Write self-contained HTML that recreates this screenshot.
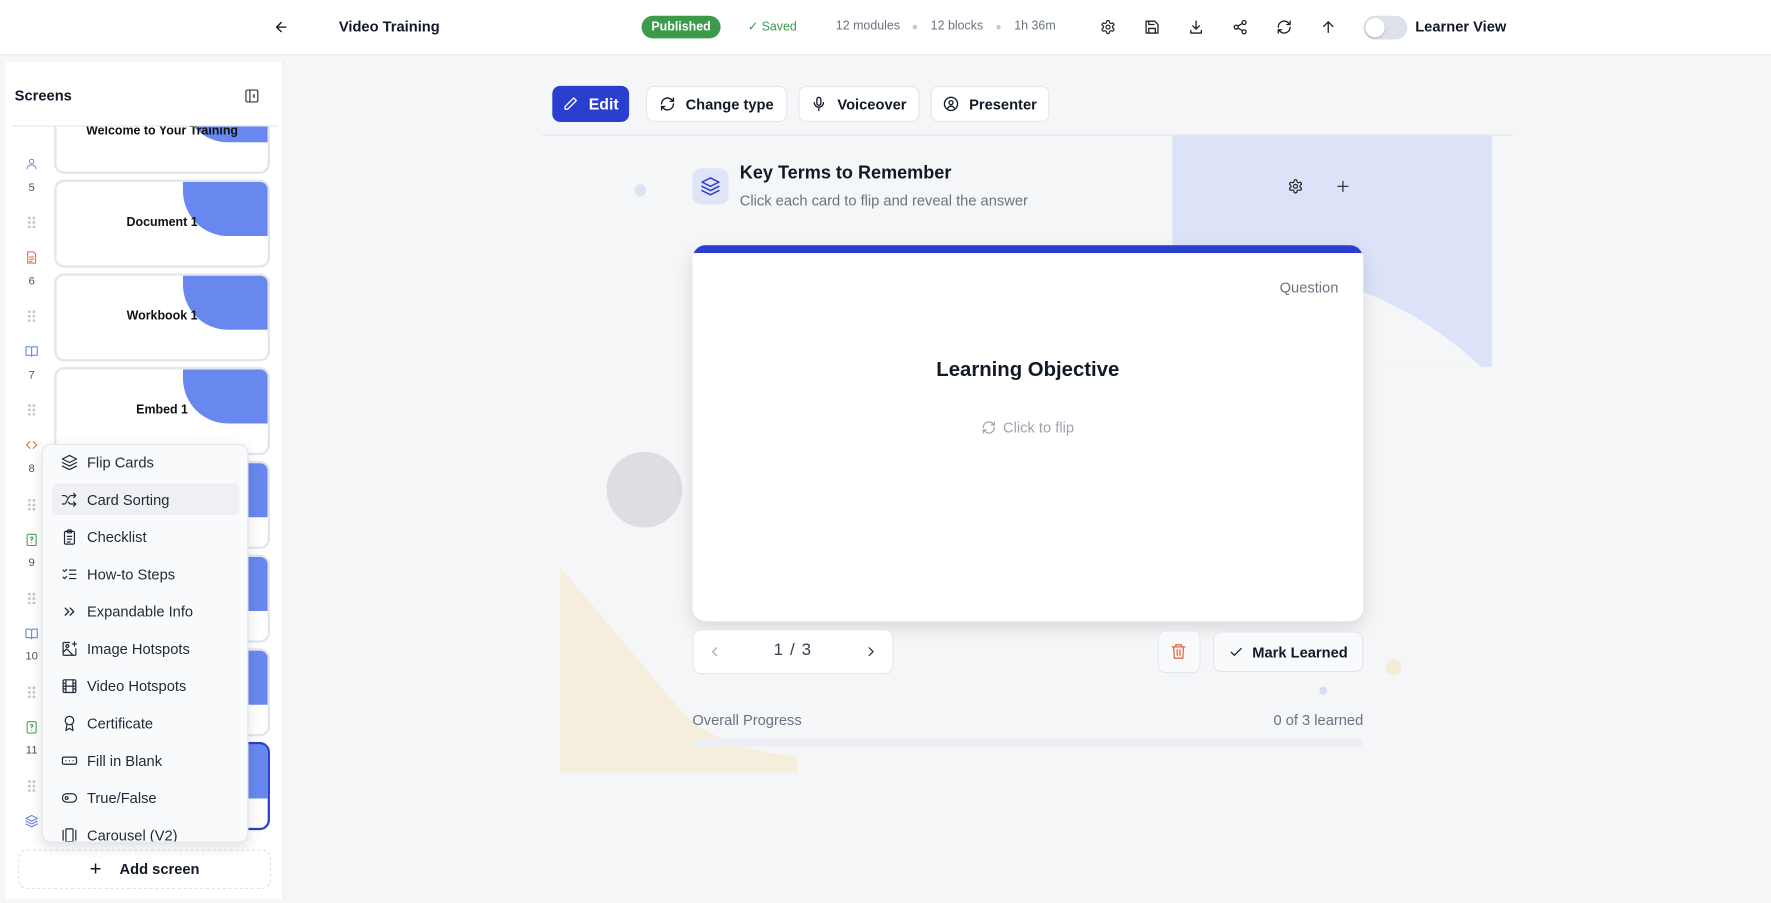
<!DOCTYPE html>
<html><head><meta charset="utf-8"><style>
*{box-sizing:border-box;margin:0;padding:0}
html,body{width:1771px;height:903px;overflow:hidden;background:#f5f6f8}
#w{width:1568px;height:800px;transform:scale(1.12946);transform-origin:0 0;position:relative;overflow:hidden;font-family:"Liberation Sans",sans-serif;color:#111827;background:#f5f6f8}
.a{position:absolute}
svg{display:block;flex-shrink:0}
.ic{fill:none;stroke:currentColor;stroke-width:2;stroke-linecap:round;stroke-linejoin:round}
.hdr{left:0;top:0;width:1568px;height:49px;background:#fff;border-bottom:1px solid #e3e6eb}
.t{font-size:12px;color:#6b7280}
.btn{background:#fff;border:1px solid #e3e6eb;border-radius:7px;height:32px;top:76px;display:flex;align-items:center;justify-content:center;gap:9px;font-size:13px;font-weight:bold;color:#111827;white-space:nowrap}
.thumb{left:48px;width:191px;height:78px;background:#fff;border:2px solid #e1e5ee;border-radius:9px;overflow:hidden}
.thumb .bl{position:absolute;right:0;top:0;width:75px;height:48px;background:#6888f0;border-bottom-left-radius:40px}
.thumb .lb{position:absolute;left:0;right:0;top:30px;text-align:center;font-size:11px;font-weight:bold;color:#111}
.num{left:20px;width:16px;text-align:center;font-size:10px;color:#4b5563}
.dots{left:24px;width:8px;height:11px;background-image:radial-gradient(circle,#c3c7cf 1.2px,transparent 1.4px);background-size:4px 4px}
.menu{left:37px;top:393px;width:183px;height:353px;background:#f9fafb;border:1px solid #e3e6eb;border-radius:8px;box-shadow:0 4px 12px rgba(0,0,0,.12);overflow:hidden}
.mi{position:absolute;left:8px;width:166px;height:28px;display:flex;align-items:center;gap:8px;padding-left:8px;font-size:13px;color:#1f2937;white-space:nowrap}
.mi svg{width:15px;height:15px}
</style></head><body><div id="w">
<div class="a hdr"></div>
<svg class="a ic" style="left:242px;top:17px;color:#111" width="14" height="14" viewBox="0 0 24 24"><path d="M19 12H5M12 19l-7-7 7-7"/></svg>
<div class="a" style="left:300px;top:16px;font-size:13px;font-weight:bold">Video Training</div>
<div class="a" style="left:568px;top:14px;width:70px;height:20px;border-radius:10px;background:#3b9b4b;color:#fff;font-size:11px;font-weight:bold;text-align:center;line-height:20px">Published</div>
<div class="a" style="left:662px;top:17px;font-size:11px;color:#3b9b4b">✓ Saved</div>
<div class="a t" style="left:740px;top:17px;font-size:11px">12 modules</div>
<div class="a" style="left:808px;top:22px;width:4px;height:4px;border-radius:2px;background:#c5c9d0"></div>
<div class="a t" style="left:824px;top:17px;font-size:11px">12 blocks</div>
<div class="a" style="left:882px;top:22px;width:4px;height:4px;border-radius:2px;background:#c5c9d0"></div>
<div class="a t" style="left:898px;top:17px;font-size:11px">1h 36m</div>
<svg class="a ic" style="left:974px;top:17px;color:#222;stroke-width:1.8" width="14" height="14" viewBox="0 0 24 24"><circle cx="12" cy="12" r="3"/><path d="M12.2 2h-.4a2 2 0 0 0-2 2v.2a2 2 0 0 1-1 1.7l-.4.3a2 2 0 0 1-2 0l-.2-.1a2 2 0 0 0-2.7.7l-.2.4a2 2 0 0 0 .7 2.7l.2.1a2 2 0 0 1 1 1.7v.5a2 2 0 0 1-1 1.7l-.2.1a2 2 0 0 0-.7 2.7l.2.4a2 2 0 0 0 2.7.7l.2-.1a2 2 0 0 1 2 0l.4.3a2 2 0 0 1 1 1.7v.2a2 2 0 0 0 2 2h.4a2 2 0 0 0 2-2v-.2a2 2 0 0 1 1-1.7l.4-.3a2 2 0 0 1 2 0l.2.1a2 2 0 0 0 2.7-.7l.2-.4a2 2 0 0 0-.7-2.7l-.2-.1a2 2 0 0 1-1-1.7v-.5a2 2 0 0 1 1-1.7l.2-.1a2 2 0 0 0 .7-2.7l-.2-.4a2 2 0 0 0-2.7-.7l-.2.1a2 2 0 0 1-2 0l-.4-.3a2 2 0 0 1-1-1.7V4a2 2 0 0 0-2-2z"/></svg>
<svg class="a ic" style="left:1013px;top:17px;color:#222" width="14" height="14" viewBox="0 0 24 24"><path d="M5 3h11l5 5v13H3V3z"/><path d="M7 3v5h8M7 21v-7h10v7"/></svg>
<svg class="a ic" style="left:1052px;top:17px;color:#222" width="14" height="14" viewBox="0 0 24 24"><path d="M12 3v12M7 10l5 5 5-5M4 17v4h16v-4"/></svg>
<svg class="a ic" style="left:1091px;top:17px;color:#222" width="14" height="14" viewBox="0 0 24 24"><circle cx="18" cy="5" r="3"/><circle cx="6" cy="12" r="3"/><circle cx="18" cy="19" r="3"/><path d="M8.6 13.5l6.8 4M15.4 6.5l-6.8 4"/></svg>
<svg class="a ic" style="left:1130px;top:17px;color:#222" width="14" height="14" viewBox="0 0 24 24"><path d="M21 12a9 9 0 0 1-15 6.7L3 16M3 12a9 9 0 0 1 15-6.7L21 8M21 3v5h-5M3 21v-5h5"/></svg>
<svg class="a ic" style="left:1169px;top:17px;color:#222" width="14" height="14" viewBox="0 0 24 24"><path d="M12 20V4M5 11l7-7 7 7"/></svg>
<div class="a" style="left:1207px;top:14px;width:39px;height:21px;border-radius:11px;background:#dde1ea"><div style="position:absolute;left:2px;top:2px;width:17px;height:17px;border-radius:9px;background:#fff;box-shadow:0 1px 2px rgba(0,0,0,.2)"></div></div>
<div class="a" style="left:1253px;top:16px;font-size:13px;font-weight:bold">Learner View</div>

<!-- sidebar -->
<div class="a" style="left:5px;top:55px;width:246px;height:741px;background:#fff;border-right:1px solid #e8eaee"></div>
<div class="a" style="left:13px;top:77px;font-size:13px;font-weight:bold">Screens</div>
<svg class="a ic" style="left:216px;top:78px;color:#333;stroke-width:1.8" width="14" height="14" viewBox="0 0 24 24"><rect x="3" y="3" width="18" height="18" rx="2"/><path d="M9 3v18M16 10l-2 2 2 2"/></svg>
<div class="a" style="left:10px;top:111px;width:236px;height:1px;background:#e3e6eb"></div>
<div class="a" style="left:0;top:112px;width:250px;height:640px;overflow:hidden">
 <div class="thumb a" style="top:-36px"><div class="bl"></div><div class="lb" style="top:32px">Welcome to Your Training</div></div>
 <div class="thumb a" style="top:47px"><div class="bl"></div><div class="lb">Document 1</div></div>
 <div class="thumb a" style="top:130px"><div class="bl"></div><div class="lb">Workbook 1</div></div>
 <div class="thumb a" style="top:213px"><div class="bl"></div><div class="lb">Embed 1</div></div>
 <div class="thumb a" style="top:296px"><div class="bl"></div></div>
 <div class="thumb a" style="top:379px"><div class="bl"></div></div>
 <div class="thumb a" style="top:462px"><div class="bl"></div></div>
 <div class="thumb a" style="top:545px;border-color:#2a3fd0"><div class="bl"></div></div>
</div>
<svg class="a ic" style="left:22px;top:139px;color:#5b7ee8;stroke-width:1.6" width="12" height="12" viewBox="0 0 24 24"><circle cx="12" cy="8" r="4"/><path d="M4 21c0-4 4-7 8-7s8 3 8 7"/></svg>
<div class="a num" style="top:161px">5</div><div class="a dots" style="top:191px"></div>
<svg class="a ic" style="left:22px;top:222px;color:#e8663c;stroke-width:1.8" width="12" height="12" viewBox="0 0 24 24"><path d="M5 2h10l4 4v16H5z"/><path d="M8 11h8M8 15h8M8 19h5"/></svg>
<div class="a num" style="top:244px">6</div><div class="a dots" style="top:274px"></div>
<svg class="a ic" style="left:22px;top:305px;color:#5b7ee8;stroke-width:1.8" width="12" height="12" viewBox="0 0 24 24"><path d="M2 4h7a3 3 0 0 1 3 3v14a2 2 0 0 0-2-2H2zM22 4h-7a3 3 0 0 0-3 3v14a2 2 0 0 1 2-2h8z"/></svg>
<div class="a num" style="top:327px">7</div><div class="a dots" style="top:357px"></div>
<svg class="a ic" style="left:22px;top:388px;color:#e8663c;stroke-width:2" width="12" height="12" viewBox="0 0 24 24"><path d="M9 6l-6 6 6 6M15 6l6 6-6 6"/></svg>
<div class="a num" style="top:410px">8</div><div class="a dots" style="top:441px"></div>
<svg class="a ic" style="left:22px;top:472px;color:#3b9b4b;stroke-width:1.8" width="12" height="12" viewBox="0 0 24 24"><rect x="4" y="2" width="16" height="20" rx="2"/><path d="M10 9a2 2 0 1 1 2 2v2M12 17h0"/></svg>
<div class="a num" style="top:493px">9</div><div class="a dots" style="top:524px"></div>
<svg class="a ic" style="left:22px;top:555px;color:#5b7ee8;stroke-width:1.8" width="12" height="12" viewBox="0 0 24 24"><path d="M2 4h7a3 3 0 0 1 3 3v14a2 2 0 0 0-2-2H2zM22 4h-7a3 3 0 0 0-3 3v14a2 2 0 0 1 2-2h8z"/></svg>
<div class="a num" style="top:576px">10</div><div class="a dots" style="top:607px"></div>
<svg class="a ic" style="left:22px;top:638px;color:#3b9b4b;stroke-width:1.8" width="12" height="12" viewBox="0 0 24 24"><rect x="4" y="2" width="16" height="20" rx="2"/><path d="M10 9a2 2 0 1 1 2 2v2M12 17h0"/></svg>
<div class="a num" style="top:659px">11</div><div class="a dots" style="top:690px"></div>
<svg class="a ic" style="left:22px;top:721px;color:#5b7ee8;stroke-width:1.8" width="12" height="12" viewBox="0 0 24 24"><path d="M12 2l10 5-10 5L2 7z"/><path d="M2 12l10 5 10-5M2 17l10 5 10-5"/></svg>
<div class="a" style="left:16px;top:752px;width:224px;height:35px;border:1px dashed #dde1e8;border-radius:8px;display:flex;align-items:center;justify-content:center;gap:16px;font-size:13px;font-weight:bold"><span style="font-size:18px;font-weight:normal">+</span>Add screen</div>

<div class="a menu">
 <div class="mi" style="top:1px"><svg class="ic" viewBox="0 0 24 24" style="stroke-width:1.7"><path d="M12 2l10 5-10 5L2 7z"/><path d="M2 12l10 5 10-5M2 17l10 5 10-5"/></svg>Flip Cards</div>
 <div class="mi" style="top:34px;background:#eef0f4;border-radius:5px"><svg class="ic" viewBox="0 0 24 24" style="stroke-width:1.7"><path d="M2 18h3c3 0 5-12 9-12h7M18 3l3 3-3 3M2 6h3c1.5 0 2.5 1 3.5 2.5M21 18h-7c-1.5 0-2.5-1-3.5-2.5M18 15l3 3-3 3"/></svg>Card Sorting</div>
 <div class="mi" style="top:67px"><svg class="ic" viewBox="0 0 24 24" style="stroke-width:1.7"><rect x="5" y="4" width="14" height="18" rx="2"/><rect x="9" y="2" width="6" height="4" rx="1"/><path d="M9 11h6M9 15h6M9 19h4"/></svg>Checklist</div>
 <div class="mi" style="top:100px"><svg class="ic" viewBox="0 0 24 24" style="stroke-width:1.7"><path d="M3 6l2 2 3-3M3 16l2 2 3-3M12 6h9M12 12h9M12 18h9"/></svg>How-to Steps</div>
 <div class="mi" style="top:133px"><svg class="ic" viewBox="0 0 24 24" style="stroke-width:1.9"><path d="M6 7l5 5-5 5M13 7l5 5-5 5"/></svg>Expandable Info</div>
 <div class="mi" style="top:166px"><svg class="ic" viewBox="0 0 24 24" style="stroke-width:1.7"><path d="M21 12v8a1 1 0 0 1-1 1H4a1 1 0 0 1-1-1V4a1 1 0 0 1 1-1h8M16 5h6M19 2v6M3 17l5-5 9 9"/><circle cx="9" cy="8" r="2"/></svg>Image Hotspots</div>
 <div class="mi" style="top:199px"><svg class="ic" viewBox="0 0 24 24" style="stroke-width:1.7"><rect x="3" y="3" width="18" height="18" rx="2"/><path d="M7 3v18M17 3v18M3 8h4M3 12h18M3 16h4M17 8h4M17 16h4"/></svg>Video Hotspots</div>
 <div class="mi" style="top:232px"><svg class="ic" viewBox="0 0 24 24" style="stroke-width:1.7"><circle cx="12" cy="8" r="6"/><path d="M8.5 13L7 22l5-3 5 3-1.5-9"/></svg>Certificate</div>
 <div class="mi" style="top:265px"><svg class="ic" viewBox="0 0 24 24" style="stroke-width:1.7"><rect x="2" y="7" width="20" height="10" rx="2"/><path d="M7 12h0M12 12h0M17 12h0"/></svg>Fill in Blank</div>
 <div class="mi" style="top:298px"><svg class="ic" viewBox="0 0 24 24" style="stroke-width:1.7"><rect x="2" y="6" width="20" height="12" rx="6"/><circle cx="8" cy="12" r="2"/></svg>True/False</div>
 <div class="mi" style="top:331px"><svg class="ic" viewBox="0 0 24 24" style="stroke-width:1.7"><rect x="7" y="3" width="10" height="18" rx="1"/><path d="M3 5v14M21 5v14"/></svg>Carousel (V2)</div>
</div>

<!-- toolbar -->
<div class="a btn" style="left:489px;width:68px;background:#2a3fd0;border-color:#2a3fd0;color:#fff;font-size:14px"><svg class="ic" width="14" height="14" viewBox="0 0 24 24"><path d="M17 3l4 4L8 20H4v-4z"/></svg>Edit</div>
<div class="a btn" style="left:572px;width:125px"><svg class="ic" width="14" height="14" viewBox="0 0 24 24"><path d="M21 12a9 9 0 0 1-15 6.7L3 16M3 12a9 9 0 0 1 15-6.7L21 8M21 3v5h-5M3 21v-5h5"/></svg>Change type</div>
<div class="a btn" style="left:707px;width:107px"><svg class="ic" width="14" height="14" viewBox="0 0 24 24"><rect x="9" y="2" width="6" height="12" rx="3"/><path d="M5 10a7 7 0 0 0 14 0M12 17v5"/></svg>Voiceover</div>
<div class="a btn" style="left:824px;width:105px"><svg class="ic" width="14" height="14" viewBox="0 0 24 24"><circle cx="12" cy="12" r="10"/><circle cx="12" cy="10" r="3"/><path d="M7 18.5c1-2 3-3 5-3s4 1 5 3"/></svg>Presenter</div>
<div class="a" style="left:480px;top:119px;width:860px;height:1px;background:#e3e6eb"></div>

<!-- decor -->
<div class="a" style="left:1038px;top:120px;width:283px;height:205px;background:#dce3f8;overflow:hidden"><div style="position:absolute;left:-283px;top:115px;width:660px;height:660px;border-radius:50%;background:#f5f6f8"></div></div>
<div class="a" style="left:562px;top:163px;width:10px;height:11px;border-radius:50%;background:#dde3f3"></div>
<div class="a" style="left:537px;top:400px;width:67px;height:67px;border-radius:50%;background:#dcdee2"></div>
<svg class="a" style="left:496px;top:502px" width="210" height="182"><path d="M0 0 L105 125 Q135 160 210 168 L210 182 L0 182Z" fill="#f5eedc"/></svg>
<div class="a" style="left:1227px;top:584px;width:14px;height:14px;border-radius:50%;background:#f4ecd6"></div>
<div class="a" style="left:1168px;top:608px;width:7px;height:7px;border-radius:50%;background:#d7def3"></div>

<!-- block header -->
<div class="a" style="left:613px;top:149px;width:32px;height:32px;border-radius:8px;background:#dfe5f7"></div>
<svg class="a ic" style="left:620px;top:156px;color:#2a3fd0;stroke-width:1.8" width="18" height="18" viewBox="0 0 24 24"><path d="M12 2l10 5-10 5L2 7z"/><path d="M2 12l10 5 10-5M2 17l10 5 10-5"/></svg>
<div class="a" style="left:655px;top:145px;font-size:16px;font-weight:bold">Key Terms to Remember</div>
<div class="a" style="left:655px;top:170px;font-size:13px;color:#6b7280">Click each card to flip and reveal the answer</div>
<svg class="a ic" style="left:1140px;top:158px;color:#222;stroke-width:1.8" width="14" height="14" viewBox="0 0 24 24"><circle cx="12" cy="12" r="3"/><path d="M12.2 2h-.4a2 2 0 0 0-2 2v.2a2 2 0 0 1-1 1.7l-.4.3a2 2 0 0 1-2 0l-.2-.1a2 2 0 0 0-2.7.7l-.2.4a2 2 0 0 0 .7 2.7l.2.1a2 2 0 0 1 1 1.7v.5a2 2 0 0 1-1 1.7l-.2.1a2 2 0 0 0-.7 2.7l.2.4a2 2 0 0 0 2.7.7l.2-.1a2 2 0 0 1 2 0l.4.3a2 2 0 0 1 1 1.7v.2a2 2 0 0 0 2 2h.4a2 2 0 0 0 2-2v-.2a2 2 0 0 1 1-1.7l.4-.3a2 2 0 0 1 2 0l.2.1a2 2 0 0 0 2.7-.7l.2-.4a2 2 0 0 0-.7-2.7l-.2-.1a2 2 0 0 1-1-1.7v-.5a2 2 0 0 1 1-1.7l.2-.1a2 2 0 0 0 .7-2.7l-.2-.4a2 2 0 0 0-2.7-.7l-.2.1a2 2 0 0 1-2 0l-.4-.3a2 2 0 0 1-1-1.7V4a2 2 0 0 0-2-2z"/></svg>
<svg class="a ic" style="left:1183px;top:159px;color:#222" width="12" height="12" viewBox="0 0 24 24"><path d="M12 3v18M3 12h18"/></svg>

<!-- card -->
<div class="a" style="left:613px;top:217px;width:594px;height:333px;background:#fff;border-radius:12px;overflow:hidden;box-shadow:0 6px 16px rgba(0,0,0,.12)"><div style="height:7px;background:#2a3fd0"></div></div>
<div class="a" style="left:1120px;top:247px;width:65px;text-align:right;font-size:13px;color:#6b7280">Question</div>
<div class="a" style="left:613px;top:317px;width:594px;text-align:center;font-size:18px;font-weight:bold">Learning Objective</div>
<div class="a" style="left:613px;top:371px;width:594px;display:flex;justify-content:center;align-items:center;gap:6px;font-size:13px;color:#9ca3af"><svg class="ic" width="13" height="13" viewBox="0 0 24 24"><path d="M21 12a9 9 0 0 1-15 6.7L3 16M3 12a9 9 0 0 1 15-6.7L21 8M21 3v5h-5M3 21v-5h5"/></svg>Click to flip</div>

<div class="a" style="left:613px;top:557px;width:178px;height:40px;background:#fff;border:1px solid #e3e6eb;border-radius:8px"></div>
<svg class="a ic" style="left:627px;top:571px;color:#9ca3af" width="12" height="12" viewBox="0 0 24 24"><path d="M15 5l-7 7 7 7"/></svg>
<div class="a" style="left:613px;top:567px;width:178px;text-align:center;font-size:15px;color:#374151;letter-spacing:1px">1 / 3</div>
<svg class="a ic" style="left:765px;top:571px;color:#222" width="12" height="12" viewBox="0 0 24 24"><path d="M9 5l7 7-7 7"/></svg>
<div class="a" style="left:1025px;top:558px;width:38px;height:38px;background:#f9fafb;border:1px solid #e3e6eb;border-radius:7px"></div>
<svg class="a ic" style="left:1036px;top:569px;color:#e8663c;stroke-width:1.8" width="15" height="15" viewBox="0 0 24 24"><path d="M3 6h18M8 6V3h8v3M5 6l1 16h12l1-16M10 10v8M14 10v8"/></svg>
<div class="a" style="left:1074px;top:559px;width:133px;height:36px;background:#f9fafb;border:1px solid #e3e6eb;border-radius:7px;display:flex;align-items:center;justify-content:center;gap:8px;font-size:13px;font-weight:bold"><svg class="ic" width="13" height="13" viewBox="0 0 24 24"><path d="M4 12l5 5L20 6"/></svg>Mark Learned</div>

<div class="a" style="left:613px;top:630px;font-size:13px;color:#6b7280">Overall Progress</div>
<div class="a" style="left:1000px;top:630px;width:207px;text-align:right;font-size:13px;color:#6b7280">0 of 3 learned</div>
<div class="a" style="left:613px;top:654px;width:594px;height:7px;border-radius:4px;background:#eceef3"></div>
</div></body></html>
